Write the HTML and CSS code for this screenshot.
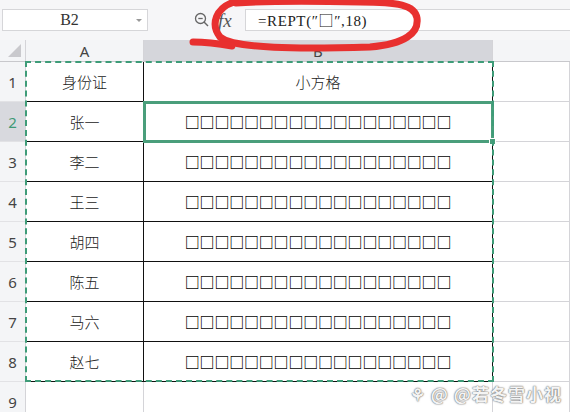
FILE: index.html
```html
<!DOCTYPE html>
<html lang="zh-CN">
<head>
  <meta charset="UTF-8" />
  <title>REPT 小方格</title>
  <link rel="stylesheet" href="styles.css">
</head>
<body>
  <div class="app">
    <div class="toolbar">
      <div class="namebox">
        <span class="ref">B2</span>
        <span class="caret"></span>
      </div>
      <div class="tools">
        <svg class="zoom-icon" width="16" height="16" viewBox="0 0 16 16">
          <circle cx="6.5" cy="6.5" r="5" fill="none" stroke="#666" stroke-width="1.3" />
          <line x1="4.3" y1="6.5" x2="8.7" y2="6.5" stroke="#666" stroke-width="1.3" />
          <line x1="10" y1="10" x2="14" y2="14" stroke="#666" stroke-width="1.4" />
        </svg>
        <span class="fx">fx</span>
      </div>
      <div class="formula">=REPT(″<span class="sq">□</span>″,18)</div>
    </div>

    <div class="sheet">
      <div class="corner"><span class="tri"></span></div>
      <div class="colhead">A</div>
      <div class="colhead active">B</div>
      <div class="colhead blank"></div>

      <div class="rowhead">1</div>
      <div class="cell t">身份证</div>
      <div class="cell t">小方格</div>
      <div class="cell g"></div>

      <div class="rowhead active">2</div>
      <div class="cell t">张一</div>
      <div class="cell t box selected">□□□□□□□□□□□□□□□□□□<span class="handle"></span></div>
      <div class="cell g"></div>

      <div class="rowhead">3</div>
      <div class="cell t">李二</div>
      <div class="cell t box">□□□□□□□□□□□□□□□□□□</div>
      <div class="cell g"></div>

      <div class="rowhead">4</div>
      <div class="cell t">王三</div>
      <div class="cell t box">□□□□□□□□□□□□□□□□□□</div>
      <div class="cell g"></div>

      <div class="rowhead">5</div>
      <div class="cell t">胡四</div>
      <div class="cell t box">□□□□□□□□□□□□□□□□□□</div>
      <div class="cell g"></div>

      <div class="rowhead">6</div>
      <div class="cell t">陈五</div>
      <div class="cell t box">□□□□□□□□□□□□□□□□□□</div>
      <div class="cell g"></div>

      <div class="rowhead">7</div>
      <div class="cell t">马六</div>
      <div class="cell t box">□□□□□□□□□□□□□□□□□□</div>
      <div class="cell g"></div>

      <div class="rowhead">8</div>
      <div class="cell t">赵七</div>
      <div class="cell t box">□□□□□□□□□□□□□□□□□□</div>
      <div class="cell g"></div>

      <div class="rowhead">9</div>
      <div class="cell g"></div>
      <div class="cell g"></div>
      <div class="cell g"></div>

      <!-- copy range marker over A1:B8 -->
      <div class="marquee"></div>
    </div>

    <svg class="scribble" width="570" height="60" viewBox="0 0 570 60">
      <path d="M234 2 C216 8 210 24 220 37 C234 49 300 49 370 47 C405 44 419 33 417 18 C415 5 398 2 360 2 C310 1 265 1 236 3"
            fill="none" stroke="#e8302f" stroke-width="7" stroke-linecap="round" />
      <path d="M193 42 C205 42 215 43 232 46" fill="none" stroke="#e8302f" stroke-width="7" stroke-linecap="round" />
    </svg>

    <div class="watermark">⚘ @ @若冬雪小视</div>
  </div>
</body>
</html>
```

FILE: styles.css
```css
* {
  box-sizing: border-box;
  margin: 0;
  padding: 0;
}

body {
  background: #fff;
  font-family: "Noto Sans CJK SC", "Noto Sans", sans-serif;
  overflow: hidden;
}

.app {
  position: relative;
  width: 570px;
  height: 412px;
}

.toolbar {
  height: 40px;
  background: #f6f6f8;
  display: flex;
  align-items: center;
  padding: 0 0 0 2px;
}

.namebox {
  width: 146px;
  height: 22px;
  background: #fff;
  border: 1px solid #d6d6d9;
  display: flex;
  align-items: center;
  position: relative;
}

.ref {
  flex: 1;
  text-align: center;
  font-family: "Liberation Serif", serif;
  font-size: 16px;
  color: #333;
}

.caret {
  width: 0;
  height: 0;
  margin-right: 5px;
  border-left: 3px solid transparent;
  border-right: 3px solid transparent;
  border-top: 3px solid #999;
}

.tools {
  width: 97px;
  display: flex;
  align-items: center;
  padding-left: 46px;
  gap: 8px;
}

.fx {
  font-family: "Liberation Serif", serif;
  font-style: italic;
  font-size: 19px;
  color: #555;
  line-height: 1;
}

.formula {
  flex: 1;
  height: 22px;
  background: #fff;
  border: 1px solid #d6d6d9;
  border-right: none;
  padding-left: 12px;
  font-family: "Liberation Serif", serif;
  font-size: 15px;
  letter-spacing: 0.6px;
  line-height: 20px;
  color: #222;
}

.formula .sq {
  font-family: "Noto Sans CJK SC", sans-serif;
  font-size: 15px;
  color: #111;
}

.sheet {
  position: relative;
  display: grid;
  grid-template-columns: 26px 118px 349px 1fr;
  grid-template-rows: 22px repeat(9, 40px);
}

.corner {
  background: #f4f5f7;
  border-right: 1px solid #d4d4d8;
  border-bottom: 1px solid #c8c8cc;
  position: relative;
}

.tri {
  position: absolute;
  right: 4px;
  bottom: 4px;
  width: 0;
  height: 0;
  border-left: 13px solid transparent;
  border-bottom: 13px solid #c9c9cd;
}

.colhead {
  background: #f4f5f7;
  border-right: 1px solid #d4d4d8;
  border-bottom: 1px solid #c8c8cc;
  text-align: center;
  font-family: "Noto Sans", sans-serif;
  font-size: 15px;
  line-height: 22px;
  color: #444;
}

.colhead.active {
  background: #d5d6db;
}

.colhead.blank {
  border-right: none;
}

.rowhead {
  background: #f4f5f7;
  border-right: 1px solid #d4d4d8;
  border-bottom: 1px solid #e2e2e5;
  display: flex;
  align-items: center;
  justify-content: center;
  font-family: "Noto Sans", sans-serif;
  font-size: 15px;
  color: #444;
}

.rowhead.active {
  background: #d8d9de;
  color: #3f9a76;
}

.cell {
  display: flex;
  align-items: center;
  justify-content: center;
  font-size: 15px;
  font-weight: 300;
  color: #222;
}

.cell.t {
  border-right: 1px solid #111;
  border-bottom: 1px solid #111;
}

.cell.g {
  border-right: 1px solid #d4d4d8;
  border-bottom: 1px solid #d4d4d8;
}

.cell.box {
  font-family: "Noto Sans CJK SC", sans-serif;
  font-size: 15px;
  font-weight: 700;
  letter-spacing: -0.2px;
  color: #000;
}

.cell.selected {
  position: relative;
  outline: 3px solid #4a9e7b;
  outline-offset: -2px;
}

.handle {
  position: absolute;
  right: -4px;
  bottom: -4px;
  width: 7px;
  height: 7px;
  background: #4a9e7b;
  border: 1px solid #fff;
}

.marquee {
  position: absolute;
  left: 25px;
  top: 21px;
  width: 469px;
  height: 321px;
  border: 2px dashed #3e9c78;
  pointer-events: none;
}

.scribble {
  position: absolute;
  left: 0;
  top: 0;
  pointer-events: none;
}

.watermark {
  position: absolute;
  left: 410px;
  top: 381px;
  font-size: 17px;
  font-weight: bold;
  color: #f4f4f4;
  text-shadow: 0 0 2px #777, 0 0 1px #555;
  letter-spacing: 1px;
}
```
